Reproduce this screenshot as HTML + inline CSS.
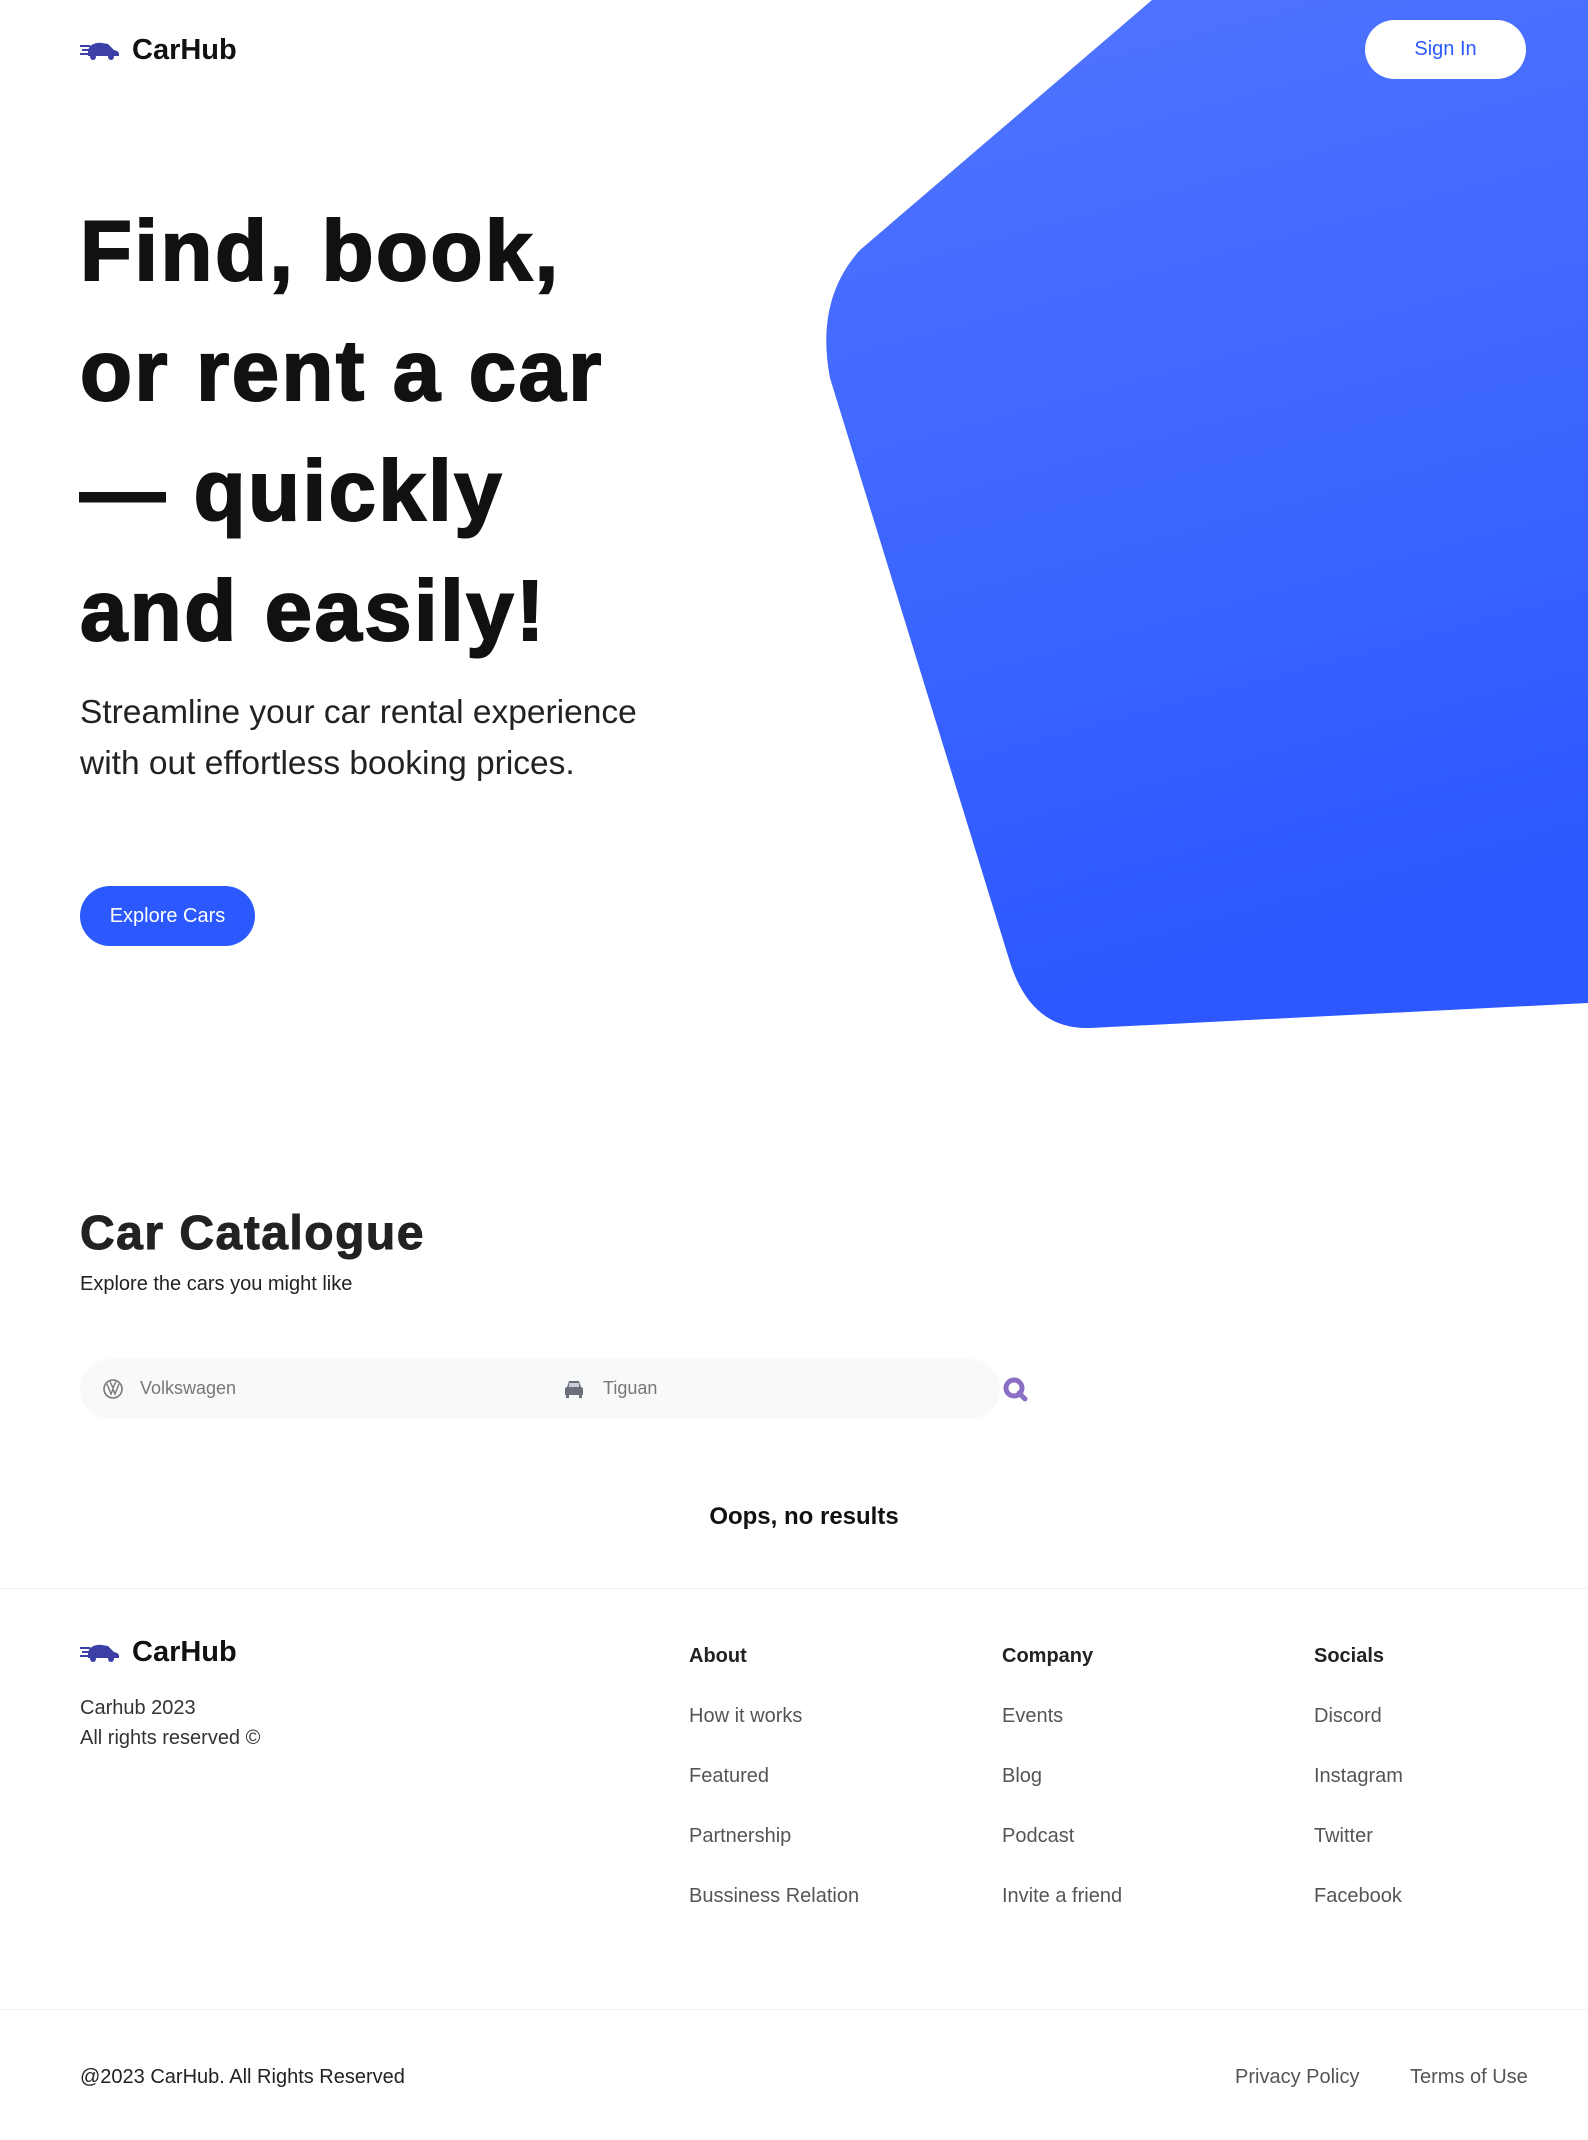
<!DOCTYPE html>
<html><head><meta charset="utf-8"><style>
*{margin:0;padding:0;box-sizing:border-box}
body{width:1588px;height:2140px;position:relative;background:#fff;font-family:"Liberation Sans",Arial,sans-serif;overflow:hidden;color:#111}
.a{position:absolute;white-space:nowrap}
.logo{display:flex;align-items:center;gap:12px}
.logo span{font-family:"Liberation Sans",sans-serif;font-weight:bold;font-size:29px;color:#111;letter-spacing:0px}
h1{position:absolute;left:80px;top:192px;font-size:85px;line-height:120px;font-weight:900;letter-spacing:2.5px;color:#111;-webkit-text-stroke:2px #111}
.sub{left:80px;top:687px;font-size:33.5px;line-height:51px;color:#222}
.btn{border-radius:40px;display:flex;align-items:center;justify-content:center;font-size:20px}
.fl{font-size:20px;color:#555}
.fh{font-size:20px;font-weight:bold;color:#222}
</style></head><body>
<svg class="a" style="left:0;top:0" width="1588" height="1040">
<defs><linearGradient id="g" x1="0" y1="0" x2="0.2" y2="1"><stop offset="0" stop-color="#5075FF"/><stop offset="1" stop-color="#2D58FF"/></linearGradient></defs>
<path d="M1152 0 L1588 0 L1588 1003 L1090 1028 Q1030 1030 1009 959 L830 378 Q815 300 860 250 Z" fill="url(#g)"/>
</svg>
<div class="a logo" style="left:80px;top:34px">
<svg width="40" height="22" viewBox="0 0 40 22"><g fill="#3B3FA6"><path d="M10 6 Q16 2 22 3 L28 4 L34 10 Q39 11 39 14 L39 16 L8 16 L8 10 Z"/><rect x="0" y="5" width="10" height="2"/><rect x="2" y="9" width="8" height="2"/><rect x="0" y="13" width="9" height="2"/><circle cx="13" cy="17" r="3"/><circle cx="31" cy="17" r="3"/></g></svg>
<span>CarHub</span></div>
<div class="a btn" style="left:1365px;top:20px;width:161px;height:59px;background:#fff;color:#2B59FF">Sign In</div>
<h1>Find, book,<br>or rent a car<br>— quickly<br>and easily!</h1>
<div class="a sub">Streamline your car rental experience<br>with out effortless booking prices.</div>
<div class="a btn" style="left:80px;top:886px;width:175px;height:60px;background:#2B59FF;color:#fff">Explore Cars</div>
<div class="a" style="left:80px;top:1206px;font-size:48px;font-weight:900;color:#222;letter-spacing:1.5px;-webkit-text-stroke:1px #222">Car Catalogue</div>
<div class="a" style="left:80px;top:1273px;font-size:20px;color:#222">Explore the cars you might like</div>
<div class="a" style="left:80px;top:1359px;width:920px;height:60px;background:#F7F9FB;border-radius:30px"></div>
<svg class="a" style="left:102px;top:1378px" width="22" height="22" viewBox="0 0 22 22"><circle cx="11" cy="11" r="9" fill="none" stroke="#777" stroke-width="1.6"/><path d="M5 6 L9 16 L11 11 L13 16 L17 6 M8 3.5 L11 10 L14 3.5" fill="none" stroke="#777" stroke-width="1.4"/></svg>
<div class="a" style="left:140px;top:1378px;font-size:18px;color:#777">Volkswagen</div>
<svg class="a" style="left:563px;top:1379px" width="22" height="20" viewBox="0 0 22 20"><path d="M4 8 L6 2 L16 2 L18 8 L20 9 L20 16 L2 16 L2 9 Z" fill="#6B6F7A"/><rect x="6" y="4" width="10" height="4" fill="#ccd"/><rect x="3" y="16" width="3" height="3" fill="#6B6F7A"/><rect x="16" y="16" width="3" height="3" fill="#6B6F7A"/></svg>
<div class="a" style="left:603px;top:1378px;font-size:18px;color:#777">Tiguan</div>
<svg class="a" style="left:1002px;top:1376px" width="26" height="26" viewBox="0 0 26 26"><circle cx="12" cy="12" r="8" fill="none" stroke="#8A6FC4" stroke-width="5"/><path d="M17 17 L23 23" stroke="#8A6FC4" stroke-width="5" stroke-linecap="round"/></svg>
<div class="a" style="left:10px;width:1588px;top:1503px;text-align:center;font-size:24px;font-weight:bold;color:#111">Oops, no results</div>
<div class="a" style="left:0;top:1588px;width:1588px;height:1px;background:#eee"></div>
<div class="a logo" style="left:80px;top:1636px">
<svg width="40" height="22" viewBox="0 0 40 22"><g fill="#3B3FA6"><path d="M10 6 Q16 2 22 3 L28 4 L34 10 Q39 11 39 14 L39 16 L8 16 L8 10 Z"/><rect x="0" y="5" width="10" height="2"/><rect x="2" y="9" width="8" height="2"/><rect x="0" y="13" width="9" height="2"/><circle cx="13" cy="17" r="3"/><circle cx="31" cy="17" r="3"/></g></svg>
<span>CarHub</span></div>
<div class="a" style="left:80px;top:1693px;font-size:20px;line-height:30px;color:#333">Carhub 2023<br>All rights reserved ©</div>
<div class="a fh" style="left:689px;top:1645px">About</div>
<div class="a fl" style="left:689px;top:1705px">How it works</div>
<div class="a fl" style="left:689px;top:1765px">Featured</div>
<div class="a fl" style="left:689px;top:1825px">Partnership</div>
<div class="a fl" style="left:689px;top:1885px">Bussiness Relation</div>
<div class="a fh" style="left:1002px;top:1645px">Company</div>
<div class="a fl" style="left:1002px;top:1705px">Events</div>
<div class="a fl" style="left:1002px;top:1765px">Blog</div>
<div class="a fl" style="left:1002px;top:1825px">Podcast</div>
<div class="a fl" style="left:1002px;top:1885px">Invite a friend</div>
<div class="a fh" style="left:1314px;top:1645px">Socials</div>
<div class="a fl" style="left:1314px;top:1705px">Discord</div>
<div class="a fl" style="left:1314px;top:1765px">Instagram</div>
<div class="a fl" style="left:1314px;top:1825px">Twitter</div>
<div class="a fl" style="left:1314px;top:1885px">Facebook</div>
<div class="a" style="left:0;top:2009px;width:1588px;height:1px;background:#f0f0f0"></div>
<div class="a" style="left:80px;top:2066px;font-size:20px;color:#222">@2023 CarHub. All Rights Reserved</div>
<div class="a fl" style="left:1235px;top:2066px">Privacy Policy</div>
<div class="a fl" style="left:1410px;top:2066px">Terms of Use</div>
</body></html>
